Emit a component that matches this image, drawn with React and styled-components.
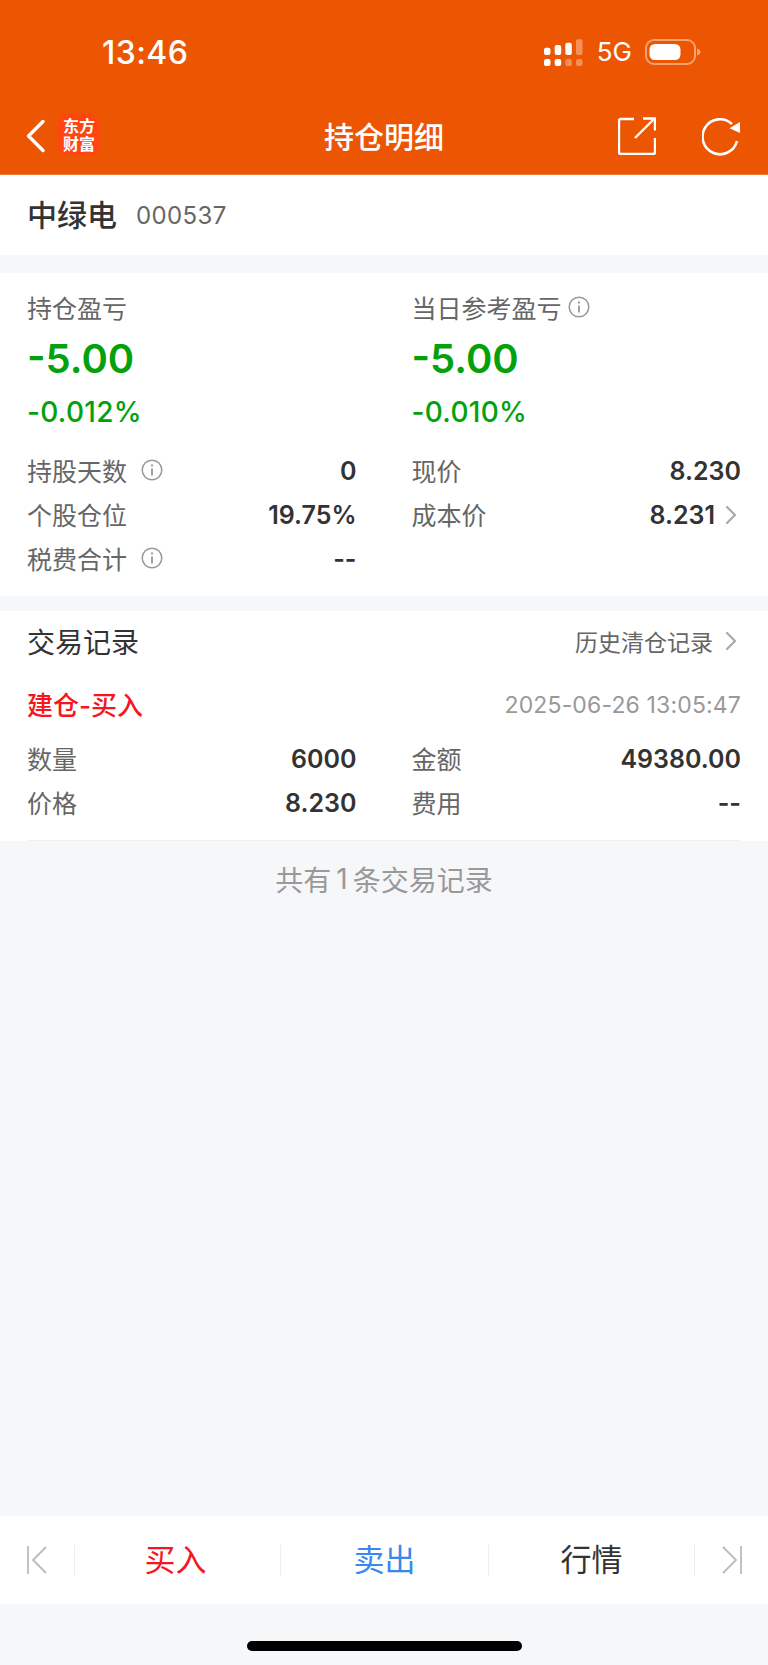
import React from 'react'
import styled, { createGlobalStyle } from 'styled-components'

const CJK = `Inter, "Noto Sans CJK SC", "Liberation Sans", sans-serif`

const GlobalStyle = createGlobalStyle`
  html, body {
    margin: 0;
    padding: 0;
    background: #f6f7f9;
  }
  * {
    box-sizing: border-box;
  }
`

const Page = styled.div`
  width: 768px;
  height: 1665px;
  display: flex;
  flex-direction: column;
  background: #f6f7f9;
  font-family: ${CJK};
  overflow: hidden;
`

const Header = styled.header`
  height: 175px;
  background: #ec5602;
  border-bottom: 1px solid #f07a38;
  color: #fff;
  flex-shrink: 0;
`

const StatusBar = styled.div`
  height: 105px;
  padding: 36px 67px 0 102px;
  display: flex;
  justify-content: space-between;
  align-items: flex-start;
`

const Clock = styled.div`
  font-size: 32px;
  line-height: 34px;
  font-weight: 500;
  letter-spacing: 0.4px;
`

const StatusRight = styled.div`
  display: flex;
  align-items: center;
  height: 30px;
  margin-top: 1px;
`

const Network = styled.span`
  font-size: 26px;
  line-height: 30px;
  margin: 0 13px 0 14px;
`

const NavBar = styled.div`
  height: 69px;
  display: flex;
  align-items: flex-start;
  padding: 0 26px;
`

const NavSide = styled.div`
  flex: 1;
  display: flex;
  align-items: center;
  justify-content: ${(p) => (p.$end ? 'flex-end' : 'flex-start')};
  gap: ${(p) => p.$gap}px;
  height: 52px;
  margin-top: 5px;
`

const Title = styled.div`
  font-size: 30px;
  line-height: 52px;
  margin-top: 6px;
  font-weight: 500;
`

const Logo = styled.div`
  width: 42px;
  height: 42px;
  border-radius: 9px;
  background: #ff4510;
  color: #fff;
  font-size: 16px;
  line-height: 18px;
  font-weight: 700;
  text-align: center;
  padding-top: 3px;
  margin-bottom: 2px;
`

const NameBar = styled.section`
  height: 80px;
  background: #fff;
  padding: 0 27px;
  display: flex;
  align-items: center;
  gap: 19px;
  flex-shrink: 0;
`

const StockName = styled.div`
  font-size: 30px;
  color: #333;
  font-weight: 500;
  padding-bottom: 4px;
`

const StockCode = styled.div`
  font-size: 24px;
  color: #666;
  letter-spacing: 0.4px;
`

const Card = styled.section`
  background: #fff;
  margin-top: ${(p) => p.$top}px;
  padding: 0 27px;
  flex-shrink: 0;
`

const SummaryCard = styled(Card)`
  height: 323px;
  padding-top: 16px;
`

const Columns = styled.div`
  display: grid;
  grid-template-columns: 1fr 1fr;
  column-gap: 55px;
`

const ProfitLabel = styled.div`
  display: flex;
  align-items: center;
  gap: 6px;
  height: 36px;
  font-size: 25px;
  color: #666;
`

const ProfitValue = styled.div`
  font-size: 40px;
  line-height: 54px;
  margin-top: 7px;
  font-weight: 600;
  color: #03a10b;
`

const ProfitRate = styled.div`
  font-size: 28px;
  line-height: 36px;
  margin-top: 8px;
  font-weight: 550;
  letter-spacing: 0.3px;
  color: #03a10b;
`

const StatRows = styled.div`
  margin-top: ${(p) => p.$top || 0}px;
`

const Row = styled.div`
  height: 44px;
  display: flex;
  align-items: center;
  justify-content: space-between;
  font-size: 25px;
`

const RowLabel = styled.div`
  display: flex;
  align-items: center;
  gap: 14px;
  color: #666;
  padding-bottom: 3px;
`

const RowValue = styled.div`
  display: flex;
  align-items: center;
  gap: 10px;
  font-weight: 600;
  color: #333;
`

const ChevronSlot = styled.span`
  display: flex;
  margin-right: 4px;
`

const TradeCard = styled(Card)`
  height: 230px;
`

const TradeHead = styled.div`
  height: 60px;
  display: flex;
  align-items: center;
  justify-content: space-between;
`

const TradeTitle = styled.div`
  font-size: 28px;
  color: #333;
`

const HistoryLink = styled.div`
  display: flex;
  align-items: center;
  gap: 12px;
  font-size: 23px;
  color: #666;
  margin-right: 4px;
`

const TradeInfo = styled.div`
  height: 48px;
  margin-top: 8px;
  display: flex;
  align-items: center;
  justify-content: space-between;
`

const TradeType = styled.div`
  font-size: 26px;
  font-weight: 500;
  color: #f5161e;
`

const TradeTime = styled.div`
  font-size: 23px;
  letter-spacing: 0.15px;
  color: #999;
  margin-top: 4px;
`

const TradeRows = styled.div`
  margin-top: 10px;
  padding-bottom: 15px;
  border-bottom: 1px solid #eee;
`

const Counter = styled.div`
  height: 75px;
  display: flex;
  align-items: center;
  justify-content: center;
  font-size: 28px;
  color: #999;
  flex-shrink: 0;
`

const CounterNumber = styled.span`
  margin: 0 5px;
`

const Footer = styled.nav`
  height: 88px;
  margin-top: auto;
  background: #fff;
  display: grid;
  grid-template-columns: 74px 206px 208px 206px 74px;
  align-items: center;
  flex-shrink: 0;
`

const FooterCell = styled.div`
  height: 31px;
  display: flex;
  align-items: center;
  justify-content: center;
  font-size: 31px;
  color: ${(p) => p.$color || '#333'};
  border-left: ${(p) => (p.$first ? 'none' : '1px solid #eee')};
`

const FooterLabel = styled.span`
  margin-bottom: 6px;
  margin-right: ${(p) => p.$nudge || 0}px;
`

const BottomArea = styled.div`
  height: 61px;
  flex-shrink: 0;
  display: flex;
  justify-content: center;
  padding-top: 37px;
`

const HomeBar = styled.div`
  width: 275px;
  height: 10px;
  border-radius: 5px;
  background: #000;
`

const Signal = () => (
  <svg width="39" height="27" viewBox="0 0 39 27" fill="#fff">
    <rect x="0" y="8.700" width="6.500" height="7.300" rx="2" />
    <rect x="0" y="20" width="6.500" height="7" rx="2" />
    <rect x="10.700" y="6" width="6.500" height="10" rx="2" />
    <rect x="10.700" y="20" width="6.500" height="7" rx="2" />
    <rect x="21.300" y="3.700" width="6.500" height="12.300" rx="2" />
    <rect x="21.300" y="20" width="6.500" height="7" rx="2" opacity="0.35" />
    <rect x="32" y="0.300" width="6.500" height="15.700" rx="2" opacity="0.35" />
    <rect x="32" y="20" width="6.500" height="7" rx="2" opacity="0.35" />
  </svg>
)

const Battery = () => (
  <svg width="56" height="26" viewBox="0 0 56 26">
    <rect x="1" y="1" width="49" height="24" rx="8" fill="none" stroke="#fff" strokeOpacity="0.45" strokeWidth="2" />
    <rect x="4.500" y="5" width="31" height="16" rx="5.500" fill="#fff" />
    <path d="M52 9.500c2.500.8 3.500 2 3.500 3.500s-1 2.700-3.500 3.500z" fill="#fff" fillOpacity="0.45" />
  </svg>
)

const BackIcon = () => (
  <svg width="20" height="34" viewBox="0 0 20 34" fill="none" stroke="#fff" strokeWidth="3.400" strokeLinecap="round" strokeLinejoin="round">
    <path d="M17 2.500 2.500 17 17 31.500" />
  </svg>
)

const ShareIcon = () => (
  <svg width="38" height="38" viewBox="0 0 38 38" fill="none" stroke="#fff" strokeWidth="2.400">
    <path d="M16 2H3a2 2 0 0 0-2 2v31a2 2 0 0 0 2 2h32a2 2 0 0 0 2-2V21" />
    <path d="M17 21 36 2" />
    <path d="M25 1.500h12v12" />
  </svg>
)

const RefreshIcon = () => (
  <svg width="40" height="40" viewBox="0 0 40 40" fill="none">
    <path d="M30 8A17.500 17.500 0 1 0 35 25" stroke="#fff" strokeWidth="2.600" />
    <path d="M38 6v11l-10.500-4.700z" fill="#fff" />
  </svg>
)

const InfoIcon = () => (
  <svg width="22" height="22" viewBox="0 0 22 22" fill="none" stroke="#999" strokeWidth="1.500">
    <circle cx="11" cy="11" r="9.800" />
    <path d="M11 9.500v7" strokeWidth="1.800" />
    <circle cx="11" cy="6.500" r="0.500" strokeWidth="1.300" />
  </svg>
)

const Chevron = () => (
  <svg width="12" height="20" viewBox="0 0 12 20" fill="none" stroke="#aaa" strokeWidth="2.200" strokeLinecap="round" strokeLinejoin="round">
    <path d="M2 2l8 8-8 8" />
  </svg>
)

// first/last record arrows, flipped for the right side
const EdgeArrow = ({ flip }) => (
  <svg width="20" height="28" viewBox="0 0 20 28" fill="none" stroke="#bbb" strokeWidth="1.800" style={flip ? { transform: 'scaleX(-1)' } : undefined}>
    <path d="M1 0v28" />
    <path d="M19 1 6 14l13 13" />
  </svg>
)

const leftStats = [
  { label: '持股天数', value: '0', info: true },
  { label: '个股仓位', value: '19.75%' },
  { label: '税费合计', value: '--', info: true },
]

const rightStats = [
  { label: '现价', value: '8.230' },
  { label: '成本价', value: '8.231', more: true },
]

const tradeLeft = [
  { label: '数量', value: '6000' },
  { label: '价格', value: '8.230' },
]

const tradeRight = [
  { label: '金额', value: '49380.00' },
  { label: '费用', value: '--' },
]

const StatList = ({ items, top }) => (
  <StatRows $top={top}>
    {items.map((item) => (
      <Row key={item.label}>
        <RowLabel>
          {item.label}
          {item.info && <InfoIcon />}
        </RowLabel>
        <RowValue>
          {item.value}
          {item.more && (
            <ChevronSlot>
              <Chevron />
            </ChevronSlot>
          )}
        </RowValue>
      </Row>
    ))}
  </StatRows>
)

const App = () => {
  return (
    <Page>
      <GlobalStyle />
      <Header>
        <StatusBar>
          <Clock>13:46</Clock>
          <StatusRight>
            <Signal />
            <Network>5G</Network>
            <Battery />
          </StatusRight>
        </StatusBar>
        <NavBar>
          <NavSide $gap={12}>
            <BackIcon />
            <Logo>
              东方
              <br />
              财富
            </Logo>
          </NavSide>
          <Title>持仓明细</Title>
          <NavSide $end $gap={46}>
            <ShareIcon />
            <RefreshIcon />
          </NavSide>
        </NavBar>
      </Header>

      <NameBar>
        <StockName>中绿电</StockName>
        <StockCode>000537</StockCode>
      </NameBar>

      <SummaryCard $top={18}>
        <Columns>
          <div>
            <ProfitLabel>持仓盈亏</ProfitLabel>
            <ProfitValue>-5.00</ProfitValue>
            <ProfitRate>-0.012%</ProfitRate>
            <StatList items={leftStats} top={19} />
          </div>
          <div>
            <ProfitLabel>
              当日参考盈亏
              <InfoIcon />
            </ProfitLabel>
            <ProfitValue>-5.00</ProfitValue>
            <ProfitRate>-0.010%</ProfitRate>
            <StatList items={rightStats} top={19} />
          </div>
        </Columns>
      </SummaryCard>

      <TradeCard $top={15}>
        <TradeHead>
          <TradeTitle>交易记录</TradeTitle>
          <HistoryLink>
            历史清仓记录
            <Chevron />
          </HistoryLink>
        </TradeHead>
        <TradeInfo>
          <TradeType>建仓-买入</TradeType>
          <TradeTime>2025-06-26 13:05:47</TradeTime>
        </TradeInfo>
        <TradeRows>
          <Columns>
            <StatList items={tradeLeft} />
            <StatList items={tradeRight} />
          </Columns>
        </TradeRows>
      </TradeCard>

      <Counter>
        共有<CounterNumber>1</CounterNumber>条交易记录
      </Counter>

      <Footer>
        <FooterCell $first>
          <EdgeArrow />
        </FooterCell>
        <FooterCell $color="#f5161e">
          <FooterLabel $nudge={4}>买入</FooterLabel>
        </FooterCell>
        <FooterCell $color="#3a87ee">
          <FooterLabel>卖出</FooterLabel>
        </FooterCell>
        <FooterCell>
          <FooterLabel>行情</FooterLabel>
        </FooterCell>
        <FooterCell>
          <EdgeArrow flip />
        </FooterCell>
      </Footer>
      <BottomArea>
        <HomeBar />
      </BottomArea>
    </Page>
  )
}

export default App
